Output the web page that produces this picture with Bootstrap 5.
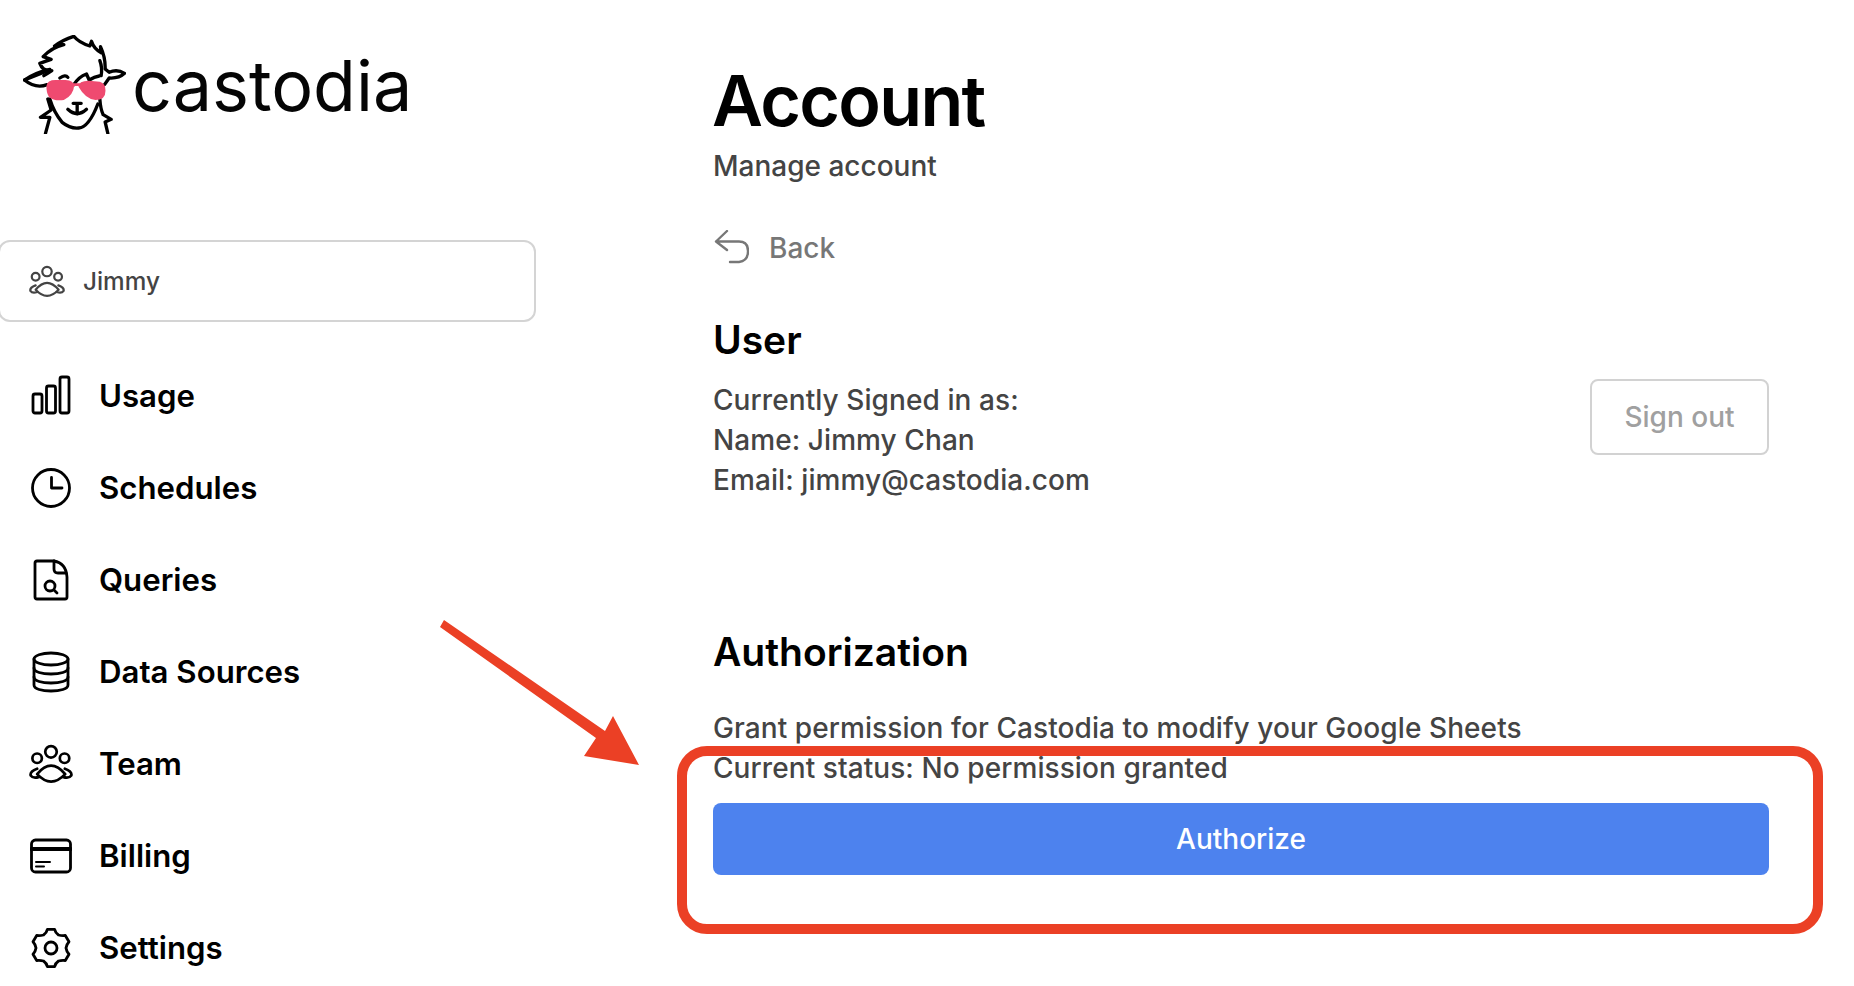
<!DOCTYPE html>
<html lang="en">
<head>
  <meta charset="UTF-8">
  <title>Account</title>
  <link href="https://cdn.jsdelivr.net/npm/bootstrap@5.3.3/dist/css/bootstrap.min.css" rel="stylesheet">
  <style>
    body { font-family: Inter, "Liberation Sans", sans-serif; color: #000; background: #fff; height: 986px; overflow: hidden; position: relative; }
    .side-col { width: 713px; flex: none; }
    .main-col { width: 1056px; flex: none; }

    /* sidebar */
    .brand-row { padding: 35px 0 0 23px; height: 240px; }
    .brand-name { font-size: 70px; font-weight: 400; line-height: 98px; margin: 2px 0 0 6px; color: #050505; }
    .user-box { width: 538px; height: 82px; margin-left: -2px; padding-left: 29px; border: 2px solid #d4d4d4; border-radius: 12px; font-size: 24.300px; font-weight: 500; color: #444; }
    .user-box svg { width: 36px; height: 33px; margin-right: 18px; }
    .side-nav { margin-top: 28px; }
    .side-nav .nav-link { height: 92px; padding: 0 0 0 30px; color: #000; font-size: 31.200px; font-weight: 600; }
    .nav-ico { width: 69px; flex: none; display: flex; }
    .nav-ico svg { width: 42px; height: 42px; fill: none; stroke: #000; stroke-width: 2.8; stroke-linecap: round; stroke-linejoin: round; }
    .nav-ico svg.team-nav { width: 44px; margin-left: -1px; }

    /* main */
    .page-title { font-size: 70px; font-weight: 600; line-height: 84px; margin: 59px 0 0 -1px; letter-spacing: -1.700px; }
    .page-sub { font-size: 28px; font-weight: 500; color: #444; line-height: 40px; margin-top: 3px; }
    .back-link { margin-top: 42px; height: 40px; color: #777; font-size: 28px; font-weight: 500; text-decoration: none; }
    .back-link svg { width: 36px; height: 36px; margin-right: 20px; fill: none; stroke: #777; stroke-width: 2.4; stroke-linecap: round; stroke-linejoin: round; }
    .sect-title { font-size: 39px; font-weight: 600; line-height: 46px; margin: 0; }
    .body-lines { font-size: 28px; font-weight: 500; color: #444; line-height: 40px; letter-spacing: .08px; }
    .sect-user { margin-top: 49px; }
    .user-row { margin-top: 17px; }
    .sect-auth { margin-top: 129px; }
    .auth-lines { margin-top: 33px; }
    .btn-signout { width: 179px; height: 76px; margin-top: -1px; border: 2px solid #d2d2d2; border-radius: 8px; color: #a0a0a0; font-size: 28px; font-weight: 500; background: #fff; }
    .btn-authorize { width: 100%; height: 72px; margin-top: 15px; background: #4d82ee; border: 0; border-radius: 8px; color: #fff; font-size: 28px; font-weight: 500; }

    /* annotation on top of the page */
    .note-box { position: absolute; left: 677px; top: 746px; width: 1146px; height: 188px; border: 10px solid #eb4025; border-radius: 30px; pointer-events: none; }
    .note-arrow { position: absolute; left: 430px; top: 610px; }
  </style>
</head>
<body>

<svg width="0" height="0" class="position-absolute">
  <symbol id="team-ico" viewBox="88 170 130 116">
    <g fill="none" stroke="currentColor" stroke-width="8" stroke-linejoin="round" stroke-linecap="round">
      <circle cx="153" cy="192" r="17"/>
      <circle cx="112" cy="211" r="14"/>
      <circle cx="193" cy="211" r="14"/>
      <path d="M112 258Q153 208 195 258Q153 302 112 258Z"/>
      <path d="M112 242Q90 250 93 262Q100 272 118 266"/>
      <path d="M194 242Q216 250 213 262Q206 272 188 266"/>
    </g>
  </symbol>
</svg>

<div class="d-flex">
  <!-- sidebar -->
  <div class="side-col">
    <div class="brand-row d-flex align-items-start">
      <svg width="103" height="99" viewBox="38 43 308 297" fill="none" stroke="#000" stroke-width="10" stroke-linejoin="round" stroke-linecap="round">
        <path d="M112 150L42 178Q75 205 110 192" />
        <path d="M42 178Q75 155 118 146" />
        <path d="M118 150Q96 150 88 128Q104 122 122 116Q108 112 98 108Q125 80 160 72Q150 70 132 76Q160 56 190 47Q205 66 238 76L243 62Q250 85 272 96L270 78Q285 110 284 145L296 155Q320 144 342 158Q325 174 296 172L282 192" />
        <path d="M100 165Q112 158 124 150M148 172Q165 160 172 170M190 192Q205 168 228 160L236 178Q252 168 266 166M268 120Q276 140 272 165" />
        <path d="M118 235Q130 275 155 305Q180 325 205 322Q235 320 262 250" />
        <path d="M112 235Q118 255 122 268L90 290L118 290L105 338" />
        <path d="M268 235Q270 265 278 282L302 296L284 304L292 338" />
        <path d="M172 266Q200 292 228 266M200 250V280M188 248H212" />
        <path d="M108 195Q110 178 135 178H165Q190 180 191 196Q188 225 160 238Q130 242 115 228Q107 215 108 195Z" fill="#ef4a70" stroke="none"/>
        <path d="M204 198Q204 180 235 180L268 183Q286 188 285 210Q285 238 255 238Q225 235 204 198Z" fill="#ef4a70" stroke="none"/>
        <path d="M188 192H207" stroke="#ef4a70" stroke-width="8"/>
      </svg>
      <span class="brand-name">castodia</span>
    </div>

    <div class="user-box d-flex align-items-center">
      <svg><use href="#team-ico"/></svg>
      <span>Jimmy</span>
    </div>

    <nav class="nav flex-column side-nav">
      <a class="nav-link d-flex align-items-center" href="#">
        <span class="nav-ico"><svg viewBox="0 0 42 42"><rect x="3" y="19" width="9" height="19" rx="2"/><rect x="16.500" y="11" width="9" height="27" rx="2"/><rect x="30" y="2" width="9" height="36" rx="2"/></svg></span>
        Usage
      </a>
      <a class="nav-link d-flex align-items-center" href="#">
        <span class="nav-ico"><svg viewBox="0 0 42 42"><circle cx="21" cy="21" r="18.500"/><path d="M21.500 10.500V21H32"/></svg></span>
        Schedules
      </a>
      <a class="nav-link d-flex align-items-center" href="#">
        <span class="nav-ico"><svg viewBox="1 0 42 42"><path d="M8 2H25Q37 4 38 18V38Q38 40 36 40H8Q6 40 6 38V4Q6 2 8 2Z"/><path d="M25 2V10Q25 14 29 14H37"/><circle cx="21" cy="27" r="5"/><path d="M25 31L28 34"/></svg></span>
        Queries
      </a>
      <a class="nav-link d-flex align-items-center" href="#">
        <span class="nav-ico"><svg viewBox="0 0 42 42"><ellipse cx="21" cy="8" rx="17" ry="6"/><path d="M4 8V34C4 38 12 40 21 40S38 38 38 34V8"/><path d="M4 17C4 21 12 23 21 23S38 21 38 17"/><path d="M4 26C4 30 12 32 21 32S38 30 38 26"/></svg></span>
        Data Sources
      </a>
      <a class="nav-link d-flex align-items-center" href="#">
        <span class="nav-ico"><svg class="team-nav"><use href="#team-ico"/></svg></span>
        Team
      </a>
      <a class="nav-link d-flex align-items-center" href="#">
        <span class="nav-ico"><svg viewBox="0 0 42 42"><rect x="1.500" y="5" width="39" height="32" rx="4"/><path d="M1.500 14H40.500" stroke-width="4"/><path d="M6 27H20M6 31.500H14" stroke-width="2"/></svg></span>
        Billing
      </a>
      <a class="nav-link d-flex align-items-center" href="#">
        <span class="nav-ico"><svg viewBox="0 0 42 42"><path d="M17.400 2.300H24.600Q25.500 6 28.500 8Q32 9 35.300 8.500L39 14.800Q36.500 17.500 36 21Q36.500 24.500 39 27.200L35.300 33.500Q32 33 28.500 34Q25.500 36 24.600 39.700H17.400Q16.500 36 13.500 34Q10 33 6.700 33.500L3 27.200Q5.500 24.500 6 21Q5.500 17.500 3 14.800L6.700 8.500Q10 9 13.500 8Q16.500 6 17.400 2.300Z"/><circle cx="21" cy="21" r="6"/></svg></span>
        Settings
      </a>
    </nav>
  </div>

  <!-- main -->
  <div class="main-col">
    <h1 class="page-title">Account</h1>
    <div class="page-sub">Manage account</div>

    <a class="back-link d-flex align-items-center" href="#">
      <svg viewBox="0 0 36 36"><path d="M14 1L3 11.500L14 20M3 11.500H26Q35 11.500 35 21Q35 31 26 32H17"/></svg>
      Back
    </a>

    <div class="sect-user">
      <h2 class="sect-title">User</h2>
      <div class="user-row d-flex justify-content-between align-items-start">
        <div class="body-lines">
          Currently Signed in as:<br>
          Name: Jimmy Chan<br>
          Email: jimmy@castodia.com
        </div>
        <button type="button" class="btn btn-signout">Sign out</button>
      </div>
    </div>

    <div class="sect-auth">
      <h2 class="sect-title">Authorization</h2>
      <div class="body-lines auth-lines">
        Grant permission for Castodia to modify your Google Sheets<br>
        Current status: No permission granted
      </div>
      <button type="button" class="btn btn-authorize">Authorize</button>
    </div>
  </div>
</div>

<!-- red annotation -->
<svg class="note-arrow" width="215" height="165" viewBox="430 610 215 165">
  <path d="M440 627L444 620L605 731L613 716L639 765L584 756L596 738Z" fill="#eb4025"/>
</svg>
<div class="note-box"></div>

<script src="https://cdn.jsdelivr.net/npm/bootstrap@5.3.3/dist/js/bootstrap.bundle.min.js"></script>
</body>
</html>
